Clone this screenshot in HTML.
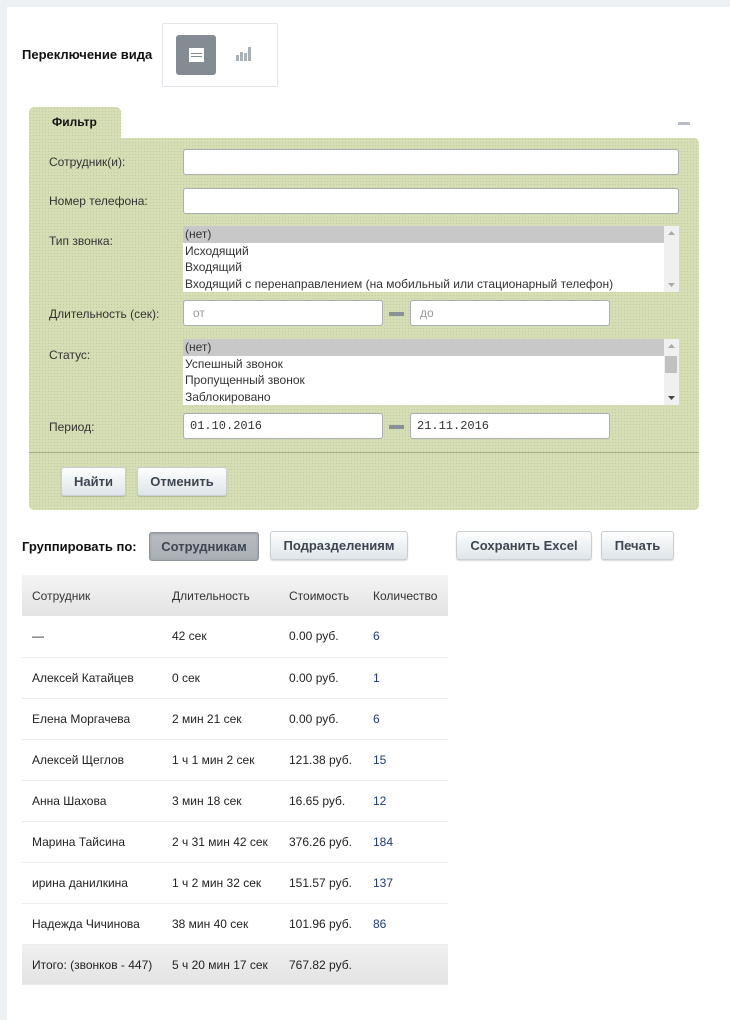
<!DOCTYPE html>
<html><head><meta charset="utf-8"><style>
*{box-sizing:border-box;margin:0;padding:0}
body{width:730px;height:1020px;background:#eef1f4;font-family:"Liberation Sans",sans-serif;font-size:12px;color:#222;position:relative;overflow:hidden}
.page{position:absolute;left:7px;top:7px;width:723px;height:1013px;background:#fff}
.a{position:absolute}
.dots{background-color:#d6deb5;background-image:radial-gradient(#c4cc9f 0.7px,transparent 0.8px);background-size:3px 3px}
.inp{position:absolute;background:#fff;border:1px solid #a9aeb5;border-radius:3px;height:26px;font-size:12px;padding:0 9px;line-height:24px;color:#999}
.lbl{position:absolute;left:49px;font-size:12px;color:#333}
.list{position:absolute;left:183px;width:496px;height:66px;background:#fff;font-size:12px;color:#333;line-height:16.5px}
.list div{padding-left:2px;height:16.5px}
.list .sel{background:#c8c8c8}
.list .sb{position:absolute;right:0;top:0;width:15px;height:66px;padding:0;background:#f0f0f0}
table{position:absolute;left:22px;top:575px;width:426px;border-collapse:collapse;font-size:12px}
td{height:41px;border-bottom:1px solid #ececec;padding-left:10px;color:#222}
tr.h td{background:linear-gradient(#f4f4f4,#e3e3e3);color:#333;border:0}
tr.f td{background:linear-gradient(#f0f0f0,#e3e3e3);border:0}
.num{color:#1f3a80}
.btn{position:absolute;height:29px;border:1px solid #c9ced3;border-radius:3px;background:linear-gradient(#fdfefe,#dfe5ea);font-weight:bold;font-size:13px;color:#3d4650;text-align:center;line-height:27px;box-shadow:0 1px 1px rgba(0,0,0,.15)}
</style></head><body>
<div class="page"></div>
<div class="a" style="left:22px;top:47px;font-weight:bold;font-size:13px;color:#111">Переключение вида</div>
<div class="a" style="left:162px;top:23px;width:116px;height:64px;border:1px solid #e3e7ec;background:#fff"></div>
<div class="a" style="left:176px;top:35px;width:40px;height:40px;background:#858b93;border-radius:3px"></div>
<div class="a" style="left:189px;top:48px;width:15px;height:14px;background:#fff"></div>
<div class="a" style="left:191px;top:53px;width:11px;height:1px;background:#858b93"></div>
<div class="a" style="left:191px;top:56px;width:11px;height:1px;background:#858b93"></div>
<svg class="a" style="left:236px;top:46px" width="16" height="16"><g fill="#aab0b7"><rect x="0" y="9" width="3" height="6"/><rect x="4" y="6" width="3" height="9"/><rect x="8" y="7" width="3" height="8"/><rect x="12" y="1" width="3" height="14"/></g></svg>

<div class="a dots" style="left:29px;top:107px;width:92px;height:34px;border-radius:5px 5px 0 0"></div>
<div class="a" style="left:52px;top:115px;font-weight:bold;font-size:12px;color:#111">Фильтр</div>
<div class="a" style="left:678px;top:122px;width:12px;height:3px;background:#b9bec4"></div>
<div class="a dots" style="left:29px;top:138px;width:670px;height:372px;border-radius:0 5px 5px 5px"></div>

<div class="lbl" style="top:155px">Сотрудник(и):</div>
<div class="inp" style="left:183px;top:149px;width:496px"></div>
<div class="lbl" style="top:194px">Номер телефона:</div>
<div class="inp" style="left:183px;top:188px;width:496px"></div>
<div class="lbl" style="top:234px">Тип звонка:</div>
<div class="list" style="top:226px"><div class="sel">(нет)</div><div>Исходящий</div><div>Входящий</div><div>Входящий с перенаправлением (на мобильный или стационарный телефон)</div><div class="sb"><svg style="position:absolute;top:5px;left:4px" width="7" height="4"><path d="M0 4L3.5 0L7 4Z" fill="#aaa"/></svg><svg style="position:absolute;bottom:5px;left:4px" width="7" height="4"><path d="M0 0L3.5 4L7 0Z" fill="#aaa"/></svg></div></div>
<div class="lbl" style="top:307px">Длительность (сек):</div>
<div class="inp" style="left:183px;top:300px;width:200px">от</div>
<div class="a" style="left:389px;top:312px;width:15px;height:4px;background:#8a9099"></div>
<div class="inp" style="left:410px;top:300px;width:200px">до</div>
<div class="lbl" style="top:348px">Статус:</div>
<div class="list" style="top:339px"><div class="sel">(нет)</div><div>Успешный звонок</div><div>Пропущенный звонок</div><div>Заблокировано</div><div class="sb"><svg style="position:absolute;top:5px;left:4px" width="7" height="4"><path d="M0 4L3.5 0L7 4Z" fill="#aaa"/></svg><span style="position:absolute;top:17px;left:1px;width:12px;height:17px;background:#c1c1c1"></span><svg style="position:absolute;bottom:5px;left:4px" width="7" height="4"><path d="M0 0L3.5 4L7 0Z" fill="#444"/></svg></div></div>
<div class="lbl" style="top:420px">Период:</div>
<div class="inp" style="left:183px;top:413px;width:200px;font-family:'Liberation Mono',monospace;color:#333;padding-left:6px">01.10.2016</div>
<div class="a" style="left:389px;top:425px;width:15px;height:4px;background:#8a9099"></div>
<div class="inp" style="left:410px;top:413px;width:200px;font-family:'Liberation Mono',monospace;color:#333;padding-left:6px">21.11.2016</div>
<div class="a" style="left:29px;top:452px;width:670px;height:1px;background:#a8ae8c"></div>
<div class="btn" style="left:61px;top:467px;width:65px">Найти</div>
<div class="btn" style="left:137px;top:467px;width:90px">Отменить</div>

<div class="a" style="left:22px;top:539px;font-weight:bold;font-size:13px;color:#111">Группировать по:</div>
<div class="btn" style="left:149px;top:532px;width:110px;background:linear-gradient(#b9bdc2,#a9aeb4);border-color:#8f959c;color:#3d4650;box-shadow:inset 0 1px 2px rgba(0,0,0,.2)">Сотрудникам</div>
<div class="btn" style="left:270px;top:531px;width:138px">Подразделениям</div>
<div class="btn" style="left:456px;top:531px;width:136px">Сохранить Excel</div>
<div class="btn" style="left:601px;top:531px;width:73px">Печать</div>

<table>
<tr class="h"><td style="width:140px">Сотрудник</td><td style="width:117px">Длительность</td><td style="width:84px">Стоимость</td><td>Количество</td></tr>
<tr><td>—</td><td>42 сек</td><td>0.00 руб.</td><td class="num">6</td></tr>
<tr><td>Алексей Катайцев</td><td>0 сек</td><td>0.00 руб.</td><td class="num">1</td></tr>
<tr><td>Елена Моргачева</td><td>2 мин 21 сек</td><td>0.00 руб.</td><td class="num">6</td></tr>
<tr><td>Алексей Щеглов</td><td>1 ч 1 мин 2 сек</td><td>121.38 руб.</td><td class="num">15</td></tr>
<tr><td>Анна Шахова</td><td>3 мин 18 сек</td><td>16.65 руб.</td><td class="num">12</td></tr>
<tr><td>Марина Тайсина</td><td>2 ч 31 мин 42 сек</td><td>376.26 руб.</td><td class="num">184</td></tr>
<tr><td>ирина данилкина</td><td>1 ч 2 мин 32 сек</td><td>151.57 руб.</td><td class="num">137</td></tr>
<tr><td>Надежда Чичинова</td><td>38 мин 40 сек</td><td>101.96 руб.</td><td class="num">86</td></tr>
<tr class="f"><td>Итого: (звонков - 447)</td><td>5 ч 20 мин 17 сек</td><td>767.82 руб.</td><td></td></tr>
</table>
</body></html>
